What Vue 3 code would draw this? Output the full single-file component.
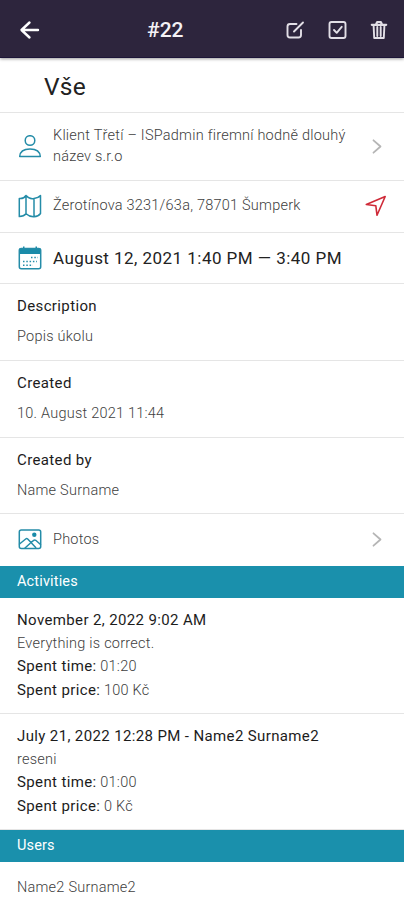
<script setup>
const details = [
  { label: 'Description', value: 'Popis úkolu' },
  { label: 'Created', value: '10. August 2021 11:44' },
  { label: 'Created by', value: 'Name Surname' },
]
const activities = [
  { title: 'November 2, 2022 9:02 AM', note: 'Everything is correct.', time: '01:20', price: '100 Kč' },
  { title: 'July 21, 2022 12:28 PM - Name2 Surname2', note: 'reseni', time: '01:00', price: '0 Kč' },
]
</script>

<template>
  <main class="screen">
    <header class="topbar">
      <svg class="back" width="22" height="22" viewBox="0 0 22 22"><path d="M19 11H3M10.5 3.500 2.500 11l8 7.500" /></svg>
      <h1>#22</h1>
      <nav>
        <svg width="20" height="20" viewBox="0 0 20 20"><path d="M11.500 4H5Q2.500 4 2.500 6.500v8.500Q2.500 17.500 5 17.500h8.500q2.500 0 2.500-2.500V10M9 11.500 18 2.500" /></svg>
        <svg width="20" height="20" viewBox="0 0 20 20"><rect x="2.500" y="2" width="16" height="16" rx="2" /><path d="m7 10 2.700 2.800 5-6" /></svg>
        <svg width="20" height="20" viewBox="0 0 20 20"><path class="lid" d="M2.800 4.800h14.400M7 4.500 8.200 2h3.600L13 4.500" /><path d="M4.600 5.500 5.200 18h9.600l.6-12.500M8.300 7v9M11.700 7v9" /></svg>
      </nav>
    </header>

    <h2 class="title">Vše</h2>

    <section class="row client">
      <svg class="icon" width="24" height="24" viewBox="0 0 24 24"><circle cx="12" cy="5.500" r="4.800" /><path d="M1.700 21.500c.3-4.800 4-7.500 10.300-7.500s10 2.700 10.300 7.500z" /></svg>
      <p>Klient Třetí – ISPadmin firemní hodně dlouhý<br />název s.r.o</p>
      <svg class="chevron" width="12" height="16" viewBox="0 0 12 16"><path d="m2.500 1.300 7 6.200-7 6.200" /></svg>
    </section>

    <section class="row address">
      <svg class="icon" width="24" height="24" viewBox="0 0 24 24"><path d="M1.300 4.500q4.700.4 6.700-3 3.500 4 8 3 4.500-.5 6.500-3v18q-2 3-6.500 3.300-4.500.2-8-3-2 2.500-6.700 2.800zM8 1.500v18.300M16 4.500v18.300" /></svg>
      <p>Žerotínova 3231/63a, 78701 Šumperk</p>
      <svg class="locate" width="22" height="22" viewBox="0 0 22 22"><path d="M20.200 1.500 12 20.200l-1.200-9.500-9.500-1.200z" /></svg>
    </section>

    <section class="row date">
      <svg class="icon" width="24" height="24" viewBox="0 0 24 24">
        <path class="solid" d="M1 8V4q0-2 2-2h2V.5h1.500V2h11V.5H19V2h2q2 0 2 2v4z" />
        <rect x="1.300" y="2.500" width="21.400" height="20.200" rx="2" />
        <path class="dots" d="M13 11.500h7M5 15.500h14M5 19.200h10" />
      </svg>
      <p>August 12, 2021 1:40 PM — 3:40 PM</p>
    </section>

    <section v-for="item in details" :key="item.label" class="detail">
      <h3>{{ item.label }}</h3>
      <p>{{ item.value }}</p>
    </section>

    <section class="row photos">
      <svg class="icon" width="24" height="24" viewBox="0 0 24 24"><rect x="1.300" y="2" width="21.400" height="18.500" rx="2" /><circle class="solid" cx="16.300" cy="6.800" r="2.200" /><path d="m1.500 16 6.200-5q1-.8 2 0l8 8.500M13 14.500l2.700-2.200q1-.8 2 0l4.800 4.200M7 20l5-4.500" /></svg>
      <p>Photos</p>
      <svg class="chevron" width="12" height="16" viewBox="0 0 12 16"><path d="m2.500 1.300 7 6.200-7 6.200" /></svg>
    </section>

    <h2 class="band">Activities</h2>
    <section v-for="item in activities" :key="item.title" class="activity">
      <h3>{{ item.title }}</h3>
      <p>{{ item.note }}</p>
      <p><b>Spent time:</b> {{ item.time }}</p>
      <p><b>Spent price:</b> {{ item.price }}</p>
    </section>

    <h2 class="band">Users</h2>
    <p class="user">Name2 Surname2</p>
  </main>
</template>

<style>
body { margin: 0; background: #fff; }
</style>

<style scoped>
* { box-sizing: border-box; }
h1, h2, h3, p { margin: 0; font-weight: inherit; }
.screen {
  height: 900px;
  overflow: hidden;
  background: #fff;
  color: #404040;
  font: 300 14.5px/23px Roboto, sans-serif;
  letter-spacing: 0.23px;
}
svg { display: block; flex: none; fill: none; stroke-linecap: round; stroke-linejoin: round; }
.topbar {
  position: relative;
  z-index: 1;
  display: flex;
  align-items: center;
  height: 58px;
  padding: 2px 15px 0 19px;
  background: #2d253d;
  border-bottom: 1px solid #1c1538;
  box-shadow: 0 1px 3px #0006;
  color: #f4f2f6;
}
.back { stroke: #fff; stroke-width: 2.4; }
.topbar h1 { margin-left: 106px; padding-top: 2px; font-size: 21px; font-weight: 500; letter-spacing: 0; }
nav { display: flex; gap: 22px; margin-left: auto; stroke: #e2dfe6; stroke-width: 1.9; }
.lid { stroke-width: 2.2; }
.title {
  height: 55px;
  padding-left: 44px;
  border-bottom: 1px solid #e5e5e5;
  color: #222;
  font-size: 24.5px;
  font-weight: 400;
  line-height: 57px;
}
.row {
  display: flex;
  align-items: center;
  height: 52px;
  padding: 0 18px;
  border-bottom: 1px solid #e5e5e5;
}
.row p { flex: 1; padding-left: 11px; line-height: 21px; white-space: nowrap; }
.client { height: 68px; }
.client p { padding-bottom: 2px; }
.address { padding-bottom: 2px; }
.icon { stroke: #248ca8; stroke-width: 1.5; }
.icon .solid { fill: #1a8ba9; stroke: none; }
.icon .dots { stroke-dasharray: 1.5 1.8; stroke-linecap: butt; }
.chevron { margin-right: 3px; stroke: #b5b5b5; stroke-width: 1.8; }
.locate { margin-right: -1px; stroke: #cf2a38; stroke-width: 1.6; }
.date { height: 51px; color: #222; font-size: 17px; font-weight: 400; letter-spacing: 0.46px; }
.detail { height: 77px; padding: 11px 17px 0; border-bottom: 1px solid #e5e5e5; }
.detail:has(+ .photos) { height: 76px; }
.detail h3, .activity h3, b { color: #1c1c1c; font-size: 15px; font-weight: 400; letter-spacing: 0.37px; }
.detail p { padding-top: 7px; }
.photos { border-bottom-color: #fff; }
.photos p { padding-bottom: 1px; }
.band {
  height: 32px;
  padding-left: 17px;
  background: #1a90ac;
  color: #fff;
  font-size: 14.5px;
  font-weight: 400;
  letter-spacing: 0.15px;
  line-height: 32px;
}
.activity { height: 116px; padding: 11px 17px 0; border-bottom: 1px solid #e5e5e5; }
.activity p { line-height: 23.3px; }
.user { padding: 14px 17px 0; }
</style>
